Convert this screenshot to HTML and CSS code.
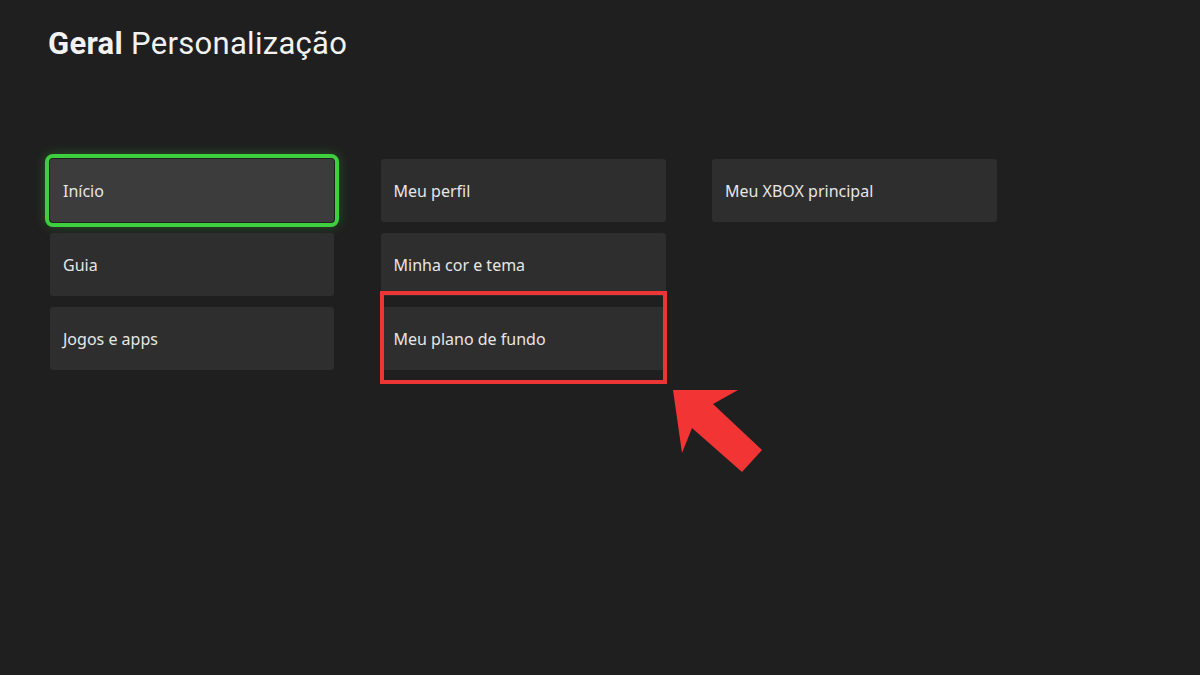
FILE: index.html
```html
<!DOCTYPE html>
<html lang="pt-BR">
<head>
<meta charset="utf-8">
<title>Geral Personalização</title>
<link rel="stylesheet" href="styles.css">
</head>
<body>
<div class="screen">
  <h1 class="title"><span class="title-strong">Geral</span> Personalização</h1>
  <div class="grid">
    <div class="col">
      <div class="tile focused">Início</div>
      <div class="tile">Guia</div>
      <div class="tile">Jogos e apps</div>
    </div>
    <div class="col">
      <div class="tile">Meu perfil</div>
      <div class="tile">Minha cor e tema</div>
      <div class="tile">Meu plano de fundo</div>
    </div>
    <div class="col">
      <div class="tile">Meu XBOX principal</div>
    </div>
  </div>
  <div class="highlight"></div>
  <svg class="arrow" width="120" height="100" viewBox="0 0 120 100">
    <polygon points="13,10 22,73 32,48 82,92 102,70 53,24 78,10" fill="#f23434"/>
  </svg>
</div>
</body>
</html>
```
FILE: styles.css
```css
html, body {
  margin: 0;
  padding: 0;
  background: #1f1f1f;
}
.screen {
  position: relative;
  width: 1200px;
  height: 675px;
  overflow: hidden;
  background: #1f1f1f;
  font-family: "Noto Sans", "Open Sans", sans-serif;
  color: #e8e8e8;
}
.title {
  margin: 0;
  padding: 26px 0 0 48px;
  font-family: Roboto, "Liberation Sans", sans-serif;
  font-weight: 400;
  font-size: 31px;
  line-height: 36px;
  color: #f2f2f2;
  letter-spacing: 0.3px;
}
.title-strong {
  font-weight: 700;
}
.grid {
  display: grid;
  grid-template-columns: 284px 285px 285px;
  column-gap: 46.5px;
  padding: 97px 0 0 50px;
}
.col {
  display: flex;
  flex-direction: column;
  gap: 11px;
}
.tile {
  height: 63px;
  box-sizing: border-box;
  display: flex;
  align-items: center;
  padding: 0 13px;
  background: #2e2e2e;
  border-radius: 3px;
  font-size: 16px;
  color: #e6e6e6;
}
.tile.focused {
  background: #3c3c3c;
  outline: 4px solid #3ecf3e;
  outline-offset: 1px;
  border-radius: 3px;
  box-shadow: 0 0 0 1px #1f1f1f, 0 0 12px 5px rgba(60, 200, 60, 0.3);
}
.highlight {
  position: absolute;
  left: 380px;
  top: 291px;
  width: 287px;
  height: 93px;
  box-sizing: border-box;
  border: 4px solid #ec3535;
}
.arrow {
  position: absolute;
  left: 660px;
  top: 380px;
}
```
